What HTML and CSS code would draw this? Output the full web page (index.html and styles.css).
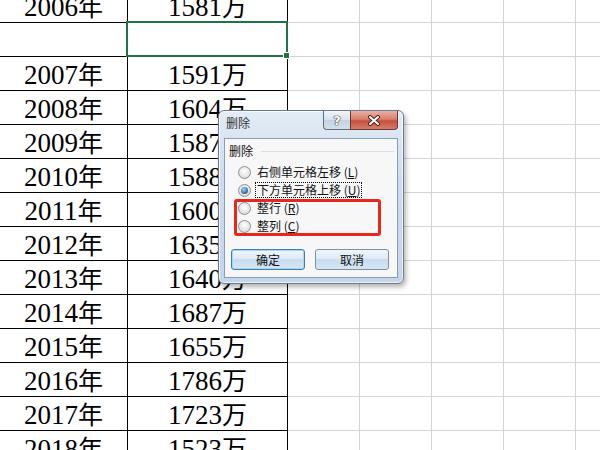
FILE: index.html
```html
<!DOCTYPE html>
<html lang="en">

<head>
  <meta charset="UTF-8" />
  <title>删除</title>
  <link rel="stylesheet" href="styles.css">
</head>

<body>

  <div class="sheet">
    <div class="cell"><span class="num">2006</span>年</div><div class="cell"><span class="num">1581</span>万</div>
    <div class="cell"></div><div class="cell selected"><span class="handle"></span></div>
    <div class="cell"><span class="num">2007</span>年</div><div class="cell"><span class="num">1591</span>万</div>
    <div class="cell"><span class="num">2008</span>年</div><div class="cell"><span class="num">1604</span>万</div>
    <div class="cell"><span class="num">2009</span>年</div><div class="cell"><span class="num">1587</span>万</div>
    <div class="cell"><span class="num">2010</span>年</div><div class="cell"><span class="num">1588</span>万</div>
    <div class="cell"><span class="num">2011</span>年</div><div class="cell"><span class="num">1600</span>万</div>
    <div class="cell"><span class="num">2012</span>年</div><div class="cell"><span class="num">1635</span>万</div>
    <div class="cell"><span class="num">2013</span>年</div><div class="cell"><span class="num">1640</span>万</div>
    <div class="cell"><span class="num">2014</span>年</div><div class="cell"><span class="num">1687</span>万</div>
    <div class="cell"><span class="num">2015</span>年</div><div class="cell"><span class="num">1655</span>万</div>
    <div class="cell"><span class="num">2016</span>年</div><div class="cell"><span class="num">1786</span>万</div>
    <div class="cell"><span class="num">2017</span>年</div><div class="cell"><span class="num">1723</span>万</div>
    <div class="cell"><span class="num">2018</span>年</div><div class="cell"><span class="num">1523</span>万</div>
  </div>

  <div class="dialog">
    <div class="titlebar">
      <span class="title">删除</span>
      <span class="btn-help">?</span>
      <span class="btn-close">
        <svg width="14" height="11" viewBox="0 0 14 11">
          <path d="M3 2 L11 9 M11 2 L3 9" stroke="#4a2420" stroke-width="4" stroke-linecap="round" />
          <path d="M3 2 L11 9 M11 2 L3 9" stroke="#fff" stroke-width="2" stroke-linecap="round" />
        </svg>
      </span>
    </div>

    <div class="client">
      <div class="group-head">
        <span>删除</span>
        <span class="group-line"></span>
      </div>

      <div class="options">
        <div class="option"><span class="radio"></span><span class="label">右侧单元格左移 (<u>L</u>)</span></div>
        <div class="option"><span class="radio checked"></span><span class="label focus">下方单元格上移 (<u>U</u>)</span></div>
        <div class="option"><span class="radio"></span><span class="label">整行 (<u>R</u>)</span></div>
        <div class="option"><span class="radio"></span><span class="label">整列 (<u>C</u>)</span></div>
      </div>

      <div class="buttons">
        <button class="default">确定</button>
        <button>取消</button>
      </div>
    </div>

    <div class="mark"></div>
  </div>

</body>

</html>
```

FILE: styles.css
```css
body {
  margin: 0;
  width: 600px;
  height: 450px;
  overflow: hidden;
  background-color: #fff;
  /* excel gridlines behind the table */
  background-image:
    linear-gradient(to right, #d4d4d4 1px, transparent 1px),
    linear-gradient(to bottom, #d4d4d4 1px, transparent 1px);
  background-size: 72px 100%, 100% 34px;
  background-position: 359px 0, 0 22px;
  font-family: "Noto Sans CJK SC", sans-serif;
  position: relative;
}

.sheet {
  display: grid;
  grid-template-columns: 128px 160px;
  grid-auto-rows: 34px;
  width: 288px;
  margin-top: -11px;
  background-color: #fff;
  font-family: "Noto Sans CJK SC", sans-serif;
  font-size: 25px;
  color: #000;
}

.num {
  font-family: "Liberation Serif", "DejaVu Serif", serif;
  font-size: 27px;
}

.cell {
  position: relative;
  box-sizing: border-box;
  border-right: 1px solid #000;
  border-bottom: 1px solid #000;
  text-align: center;
  line-height: 33px;
}

.selected::after {
  content: '';
  position: absolute;
  left: -2px;
  top: -2px;
  right: -1px;
  bottom: -1px;
  border: 2px solid #217346;
}

.handle {
  position: absolute;
  right: -3px;
  bottom: -3px;
  width: 5px;
  height: 5px;
  background-color: #217346;
  border: 1px solid #fff;
  z-index: 1;
}

/* dialog */
.dialog {
  position: absolute;
  left: 218px;
  top: 110px;
  width: 186px;
  height: 174px;
  box-sizing: border-box;
  display: flex;
  flex-direction: column;
  padding: 0 5px 5px;
  border: 1px solid #6b7a8c;
  border-radius: 6px;
  background: linear-gradient(#e3ecf6, #cddcee 40%, #c5d6ea);
  box-shadow: inset 0 0 0 1px rgba(255, 255, 255, 0.7), 2px 3px 5px rgba(0, 0, 0, 0.3);
  font-size: 12px;
  color: #111;
}

.titlebar {
  height: 27px;
  display: flex;
  align-items: flex-start;
}

.title {
  flex: 1;
  padding-left: 2px;
  line-height: 24px;
  color: #333;
}

.btn-help,
.btn-close {
  box-sizing: border-box;
  height: 19px;
  display: flex;
  align-items: center;
  justify-content: center;
  border: 1px solid #5f6f82;
  border-top: none;
}

.btn-help {
  width: 27px;
  border-right: none;
  border-radius: 0 0 0 4px;
  background: linear-gradient(#f1f5fa, #d7e2ee 50%, #c3d2e2 50%, #d3dfec);
  font-family: "DejaVu Sans", sans-serif;
  font-weight: bold;
  font-size: 13px;
  color: #fff;
  text-shadow: 0 0 1px #333, 0 0 1px #333, 0 0 1px #333;
}

.btn-close {
  width: 48px;
  border-radius: 0 0 4px 0;
  border-color: #6a3a34;
  background: linear-gradient(#eab0a4, #d9806f 45%, #c6503c 55%, #d57d69);
}

.client {
  flex: 1;
  border: 1px solid #8b9db2;
  background-color: #f7f7f7;
  padding-top: 4px;
}

.group-head {
  display: flex;
  align-items: center;
  padding-left: 4px;
  line-height: 15px;
}

.group-line {
  flex: 1;
  margin: 1px 3px 0 8px;
  border-top: 1px solid #d5dfe5;
}

.options {
  margin-top: 5px;
  padding-left: 13px;
}

.option {
  height: 18px;
  display: flex;
  align-items: center;
}

.radio {
  position: relative;
  box-sizing: border-box;
  width: 13px;
  height: 13px;
  border: 1px solid #8e8f8f;
  border-radius: 50%;
  background: radial-gradient(circle at 50% 40%, #fff, #e6e6e6 55%, #c9c9c9);
}

.radio.checked::after {
  content: '';
  position: absolute;
  left: 2px;
  top: 2px;
  width: 7px;
  height: 7px;
  border-radius: 50%;
  background: radial-gradient(circle at 40% 35%, #a8d6f7, #2f72a8 60%, #1c4c78);
}

.label {
  margin-left: 4px;
  padding: 0 1px;
  border: 1px dotted transparent;
  line-height: 14px;
}

.label.focus {
  border-color: #000;
}

.buttons {
  display: flex;
  gap: 10px;
  margin-top: 14px;
  padding-left: 6px;
}

button {
  width: 74px;
  height: 21px;
  padding: 0;
  border: 1px solid #7b8fa5;
  border-radius: 3px;
  background: linear-gradient(#f0f6fc, #dce9f6 50%, #c9ddf0 50%, #d5e5f4);
  font-family: "Noto Sans CJK SC", sans-serif;
  font-size: 12px;
  color: #111;
}

button.default {
  border-color: #3c7fb1;
  box-shadow: inset 0 0 0 1px #a9d6f5;
}

.mark {
  position: absolute;
  left: 15px;
  top: 88px;
  width: 147px;
  height: 37px;
  box-sizing: border-box;
  border: 3px solid #e8261f;
  border-radius: 3px;
}
```
